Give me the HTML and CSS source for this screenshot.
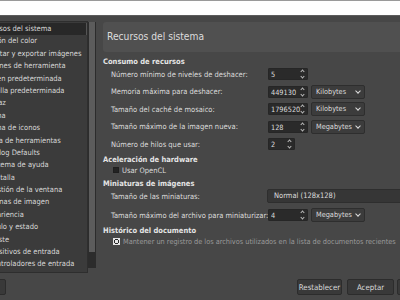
FILE: index.html
```html
<!DOCTYPE html>
<html lang="es">
<head>
    <meta charset="UTF-8">
    <link rel="stylesheet" href="styles.css">
    <title>Preferencias</title>
</head>
<body>
    <div class="topbar"></div>
    <div class="dialog">
        <div class="sidebar">
            <ul class="list">
                <li class="selected">Recursos del sistema</li>
                <li>Gestión del color</li>
                <li>Importar y exportar imágenes</li>
                <li>Opciones de herramienta</li>
                <li>Imagen predeterminada</li>
                <li class="sub">Rejilla predeterminada</li>
                <li>Interfaz</li>
                <li class="sub">Tema</li>
                <li class="sub">Tema de iconos</li>
                <li class="sub">Caja de herramientas</li>
                <li class="sub">Dialog Defaults</li>
                <li class="sub">Sistema de ayuda</li>
                <li class="sub">Pantalla</li>
                <li class="sub">Gestión de la ventana</li>
                <li>Ventanas de imagen</li>
                <li class="sub">Apariencia</li>
                <li class="sub">Título y estado</li>
                <li class="sub">Ajuste</li>
                <li>Dispositivos de entrada</li>
                <li class="sub">Controladores de entrada</li>
            </ul>
            <div class="scrollbar"><div class="thumb"></div></div>
        </div>

        <div class="content">
            <div class="page-title">Recursos del sistema</div>

            <div class="section">Consumo de recursos</div>
            <div class="row first">
                <span class="label">Número mínimo de niveles de deshacer:</span>
                <span class="spin">5<i class="arrows"></i></span>
            </div>
            <div class="row">
                <span class="label">Memoria máxima para deshacer:</span>
                <span class="spin">449130<i class="arrows"></i></span>
                <span class="combo">Kilobytes</span>
            </div>
            <div class="row">
                <span class="label">Tamaño del caché de mosaico:</span>
                <span class="spin">1796520<i class="arrows"></i></span>
                <span class="combo">Kilobytes</span>
            </div>
            <div class="row">
                <span class="label">Tamaño máximo de la imagen nueva:</span>
                <span class="spin">128<i class="arrows"></i></span>
                <span class="combo">Megabytes</span>
            </div>
            <div class="row">
                <span class="label">Número de hilos que usar:</span>
                <span class="spin small">2<i class="arrows"></i></span>
            </div>

            <div class="section">Aceleración de hardware</div>
            <div class="check"><span class="box"></span>Usar OpenCL</div>

            <div class="section">Miniaturas de imágenes</div>
            <div class="row first">
                <span class="label">Tamaño de las miniaturas:</span>
                <span class="combo wide">Normal (128x128)</span>
            </div>
            <div class="row loose">
                <span class="label">Tamaño máximo del archivo para miniaturizar:</span>
                <span class="spin">4<i class="arrows"></i></span>
                <span class="combo">Megabytes</span>
            </div>

            <div class="section">Histórico del documento</div>
            <div class="check dim"><span class="box checked"></span>Mantener un registro de los archivos utilizados en la lista de documentos recientes</div>
        </div>
    </div>

    <div class="footer">
        <button class="btn help">Ayuda</button>
        <span class="spacer"></span>
        <button class="btn reset">Restablecer</button>
        <button class="btn ok">Aceptar</button>
        <button class="btn ok">Cancelar</button>
    </div>
</body>
</html>
```

FILE: styles.css
```css
body {
    margin: 0;
    width: 400px;
    height: 300px;
    overflow: hidden;
    background-color: #474747;
    color: #dcdcdc;
    font-family: "DejaVu Sans Condensed", "DejaVu Sans", sans-serif;
    font-size: 7.5px;
}


.topbar {
    height: 14px;
    background-color: #ffffff;
    border-top: 1px solid #9a9a9a;
    border-bottom: 1px solid #5c5c5c;
}


.dialog {
    display: flex;
    padding-top: 5px;
    height: 254px;
}


.sidebar {
    display: flex;
    margin-left: -25px;
    width: 121px;
    flex-shrink: 0;
}


.list {
    list-style: none;
    margin: 0;
    padding: 1px 0 0 0;
    width: 111px;
    height: 249px;
    background-color: #3b3b3b;
    border: 1px solid #2e2e2e;
    overflow: hidden;
}


.list li {
    height: 12.4px;
    line-height: 12px;
    padding-left: 4px;
    white-space: nowrap;
    color: #d8d8d8;
}


.list li.sub {
    padding-left: 12px;
}


.list li.selected {
    background-color: #282828;
    border-right: 1px solid #555;
}


.scrollbar {
    width: 8px;
    height: 246px;
    margin-top: 1px;
    background-color: #2c2c2c;
}


.scrollbar .thumb {
    margin-left: 1px;
    width: 6px;
    height: 230px;
    background-color: #5c5c5c;
}


.content {
    margin-left: 7px;
    width: 320px;
    flex-shrink: 0;
}


.page-title {
    height: 30px;
    line-height: 30px;
    margin-top: 1px;
    padding-left: 4px;
    font-size: 10.2px;
    background-color: #505050;
    border-radius: 3px;
    width: 330px;
}


.section {
    font-weight: bold;
    height: 10px;
    line-height: 10px;
    margin-top: 4px;
    color: #e4e4e4;
}


.page-title + .section {
    margin-top: 5px;
}


.row {
    display: flex;
    align-items: center;
    height: 14px;
    margin-top: 3.5px;
    padding-left: 8px;
}


.row.first {
    margin-top: -1px;
}


.section + .row.first {
    margin-top: 0;
}


.row.loose {
    margin-top: 5px;
}


.label {
    width: 157px;
    flex-shrink: 0;
    white-space: nowrap;
}


.spin {
    position: relative;
    box-sizing: border-box;
    width: 40px;
    height: 12px;
    line-height: 11px;
    padding-left: 2px;
    background-color: #2a2a2a;
    border: 1px solid #262626;
    border-radius: 1px;
    font-size: 7.3px;
}


.spin.small {
    width: 27px;
}


.arrows::before,
.arrows::after {
    content: "";
    position: absolute;
    right: 3px;
    width: 2px;
    height: 2px;
    border-left: 1px solid #bbb;
    border-top: 1px solid #bbb;
    transform: rotate(45deg);
}


.arrows::before {
    top: 1px;
}


.arrows::after {
    bottom: 1px;
    transform: rotate(225deg);
}


.combo {
    position: relative;
    box-sizing: border-box;
    width: 54px;
    height: 14px;
    line-height: 12px;
    margin-left: 3px;
    padding-left: 4px;
    background-color: #3c3c3c;
    border: 1px solid #2e2e2e;
    border-radius: 2px;
    font-size: 7.3px;
}


.combo::after {
    content: "";
    position: absolute;
    right: 4px;
    top: 3px;
    width: 3px;
    height: 3px;
    border-right: 1px solid #ddd;
    border-bottom: 1px solid #ddd;
    transform: rotate(45deg);
}


.combo.wide {
    width: 150px;
    margin-left: -1px;
    padding-left: 6px;
    background-color: #363636;
    font-size: 7.5px;
}


.combo.wide::after {
    display: none;
}


.check {
    display: flex;
    align-items: center;
    height: 10px;
    padding-left: 10px;
    white-space: nowrap;
}


.check.dim {
    color: #9a9a9a;
    font-size: 7.3px;
}


.box {
    box-sizing: border-box;
    width: 6px;
    height: 6px;
    margin-right: 3px;
    background-color: #232323;
    border: 1px solid #1e1e1e;
}


.box.checked {
    width: 7px;
    height: 7px;
    background-color: #2a2a2a;
    border: 1px solid #e6e6e6;
    background-image:
        linear-gradient(45deg, transparent 40%, #e6e6e6 40%, #e6e6e6 60%, transparent 60%),
        linear-gradient(-45deg, transparent 40%, #e6e6e6 40%, #e6e6e6 60%, transparent 60%);
}


.footer {
    display: flex;
    align-items: center;
    width: 447px;
    height: 16px;
    margin-top: 4px;
}


.spacer {
    flex: 1;
}


.btn {
    box-sizing: border-box;
    height: 16px;
    padding: 0;
    margin-right: 5px;
    font-family: "DejaVu Sans Condensed", "DejaVu Sans", sans-serif;
    font-size: 7.8px;
    color: #dcdcdc;
    background-color: #393939;
    border: 1px solid #2c2c2c;
    border-radius: 2px;
}


.btn.reset {
    width: 45px;
}


.btn.ok {
    width: 47px;
    margin-right: 3px;
}


.btn.help {
    margin-left: -40px;
    width: 46px;
}
```
